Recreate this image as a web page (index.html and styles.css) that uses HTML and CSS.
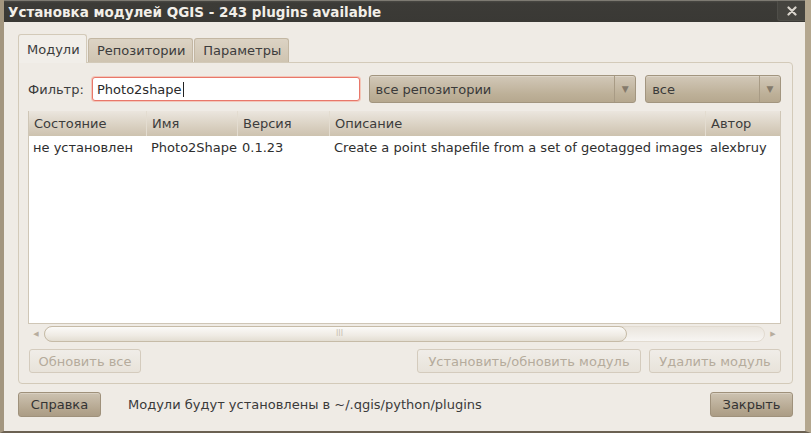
FILE: index.html
```html
<!DOCTYPE html>
<html lang="ru">
<head>
<meta charset="utf-8">
<title>Установка модулей QGIS</title>
<link rel="stylesheet" href="styles.css">
</head>
<body>
<div class="window">
  <div class="titlebar">
    <span class="title">Установка модулей QGIS - 243 plugins available</span>
    <span class="close"><svg width="10" height="10" viewBox="0 0 10 10"><path d="M1.5 1.5 L8.5 8.5 M8.5 1.5 L1.5 8.5" stroke="#d8d4cc" stroke-width="2.2" stroke-linecap="round"/></svg></span>
  </div>
  <div class="body">
    <div class="tabs">
      <div class="tab active">Модули</div>
      <div class="tab">Репозитории</div>
      <div class="tab">Параметры</div>
    </div>
    <div class="pane">
      <div class="filter-row">
        <span class="label">Фильтр:</span>
        <div class="input">Photo2shape<span class="caret"></span></div>
        <div class="combo repo"><span class="combo-text">все репозитории</span><span class="combo-arrow">▼</span></div>
        <div class="combo kind"><span class="combo-text">все</span><span class="combo-arrow">▼</span></div>
      </div>
      <div class="tablebox">
        <div class="grid">
          <div class="th">Состояние</div>
          <div class="th">Имя</div>
          <div class="th">Версия</div>
          <div class="th">Описание</div>
          <div class="th last">Автор</div>
          <div class="td">не установлен</div>
          <div class="td">Photo2Shape</div>
          <div class="td">0.1.23</div>
          <div class="td">Create a point shapefile from a set of geotagged images</div>
          <div class="td">alexbruy</div>
        </div>
        <div class="hscroll">
          <span class="sarrow left">◀</span>
          <div class="trough"><div class="thumb"><span class="grip">III</span></div></div>
          <span class="sarrow right">▶</span>
        </div>
      </div>
      <div class="actions">
        <div class="btn disabled upd">Обновить все</div>
        <div class="spacer"></div>
        <div class="btn disabled inst">Установить/обновить модуль</div>
        <div class="btn disabled del">Удалить модуль</div>
      </div>
    </div>
    <div class="footer">
      <div class="btn active-btn">Справка</div>
      <span class="footnote">Модули будут установлены в ~/.qgis/python/plugins</span>
      <div class="spacer"></div>
      <div class="btn active-btn">Закрыть</div>
    </div>
  </div>
</div>
</body>
</html>
```

FILE: styles.css
```css
html, body {
  margin: 0;
  padding: 0;
  background: #efebe5;
}
body {
  font-family: "DejaVu Sans", "Liberation Sans", sans-serif;
  font-size: 13px;
  color: #3c3c3c;
}
.window {
  width: 811px;
  height: 433px;
  box-sizing: border-box;
  display: flex;
  flex-direction: column;
  background: #efebe5;
  border-left: 4px solid #a3967f;
  border-right: 6px solid #b4a78f;
  border-bottom: 2px solid #6b6152;
  overflow: hidden;
}
.titlebar {
  height: 22px;
  flex: none;
  background: linear-gradient(#4a4944 0, #3c3b37 2px, #3a3935 100%);
  border-top: 1px solid #7d7a72;
  box-sizing: border-box;
  display: flex;
  align-items: center;
  margin-left: -4px;
  padding-left: 8px;
}
.title {
  font-weight: bold;
  font-size: 13.5px;
  color: #f2efe9;
  flex: 1;
  white-space: nowrap;
  line-height: 20px;
}
.close {
  width: 27px;
  height: 19px;
  margin-top: -1px;
  background: #45443f;
  border-left: 1px solid #4f4e49;
  border-bottom: 1px solid #4f4e49;
  border-radius: 0 0 0 3px;
  display: flex;
  align-items: center;
  justify-content: center;
}
.body {
  flex: 1;
  display: flex;
  flex-direction: column;
  padding: 12px 12px 0 14px;
}
.tabs {
  display: flex;
  align-items: flex-end;
  height: 28px;
  position: relative;
  z-index: 1;
}
.tab {
  height: 24px;
  box-sizing: border-box;
  padding: 0 7px 0 8px;
  display: flex;
  align-items: center;
  background: linear-gradient(#dcd3c4, #cfc4b1);
  border: 1px solid #c3b7a3;
  border-bottom: none;
  border-radius: 3px 3px 0 0;
  margin-right: 1px;
  color: #3c3c3c;
}
.tab.active {
  height: 29px;
  margin-bottom: -1px;
  background: #f1eee9;
  border-color: #d3cab9;
  width: 69px;
}
.pane {
  height: 322px;
  box-sizing: border-box;
  border: 1px solid #d3cab9;
  border-radius: 0 4px 4px 4px;
  padding: 12px 11px 0 9px;
  display: flex;
  flex-direction: column;
}
.filter-row {
  display: flex;
  align-items: center;
  height: 28px;
}
.label {
  width: 64px;
  flex: none;
}
.input {
  width: 268px;
  height: 24px;
  box-sizing: border-box;
  background: #fff;
  border: 1px solid #e8776a;
  border-radius: 3px;
  box-shadow: 0 0 0 1px #f3c6b9;
  display: flex;
  align-items: center;
  padding-left: 4px;
  color: #2a2a2a;
}
.caret {
  width: 1px;
  height: 15px;
  background: #222;
  margin-left: 1px;
}
.combo {
  height: 28px;
  box-sizing: border-box;
  border: 1px solid #a2957f;
  border-radius: 3px;
  background: linear-gradient(#d2c8b8, #bdb098 70%, #b6a88f);
  display: flex;
  align-items: center;
  box-shadow: inset 0 1px 0 #ddd5c8;
}
.combo.repo {
  width: 268px;
  margin-left: 9px;
}
.combo.kind {
  width: 136px;
  margin-left: 9px;
}
.combo-text {
  flex: 1;
  padding-left: 6px;
  color: #3a3a3a;
}
.combo-arrow {
  width: 21px;
  height: 26px;
  box-sizing: border-box;
  border-left: 1px solid #a89b85;
  display: flex;
  align-items: center;
  justify-content: center;
  font-size: 9px;
  color: #847a6b;
}
.tablebox {
  margin-top: 8px;
  display: flex;
  flex-direction: column;
}
.grid {
  height: 213px;
  box-sizing: border-box;
  background: #fff;
  border: 1px solid #cfc6b6;
  border-top: none;
  display: grid;
  grid-template-columns: 118px 91px 92px 376px 1fr;
  grid-template-rows: 25px 20px;
  align-content: start;
}
.th {
  background: linear-gradient(#ebe6de, #d9d0c1 60%, #cdc2af);
  border-right: 1px solid #e3dcd0;
  display: flex;
  align-items: center;
  padding-left: 5px;
  color: #3c3c3c;
  white-space: nowrap;
}
.th.last {
  border-right: none;
}
.td {
  display: flex;
  align-items: center;
  padding-left: 4px;
  white-space: nowrap;
  color: #2e2e2e;
  padding-top: 2px;
}
.hscroll {
  height: 17px;
  margin-top: 1px;
  display: flex;
  align-items: center;
}
.sarrow {
  font-size: 7px;
  color: #b7ad9e;
  width: 16px;
  text-align: center;
}
.trough {
  flex: 1;
  height: 16px;
  box-sizing: border-box;
  border: 1px solid #e2dbd0;
  border-radius: 8px;
  background: linear-gradient(#eae5dd, #f7f5f2);
  display: flex;
}
.thumb {
  width: 583px;
  height: 16px;
  margin-top: -1px;
  margin-left: -1px;
  box-sizing: border-box;
  border: 1px solid #c6bba7;
  border-radius: 8px;
  background: linear-gradient(#fbfaf8, #efebe4 60%, #e3ddd2);
  display: flex;
  align-items: center;
  justify-content: center;
}
.grip {
  font-size: 8px;
  color: #c9c1b3;
  margin-left: 8px;
}
.actions {
  display: flex;
  margin-top: 7px;
  height: 24px;
}
.spacer {
  flex: 1;
}
.btn {
  height: 24px;
  box-sizing: border-box;
  border-radius: 3px;
  display: flex;
  align-items: center;
  justify-content: center;
  white-space: nowrap;
}
.btn.disabled {
  border: 1px solid #d4cbbd;
  background: linear-gradient(#f0ede8, #e8e3da);
  color: #b5ab9c;
}
.btn.upd {
  width: 112px;
  margin-left: 1px;
}
.btn.inst {
  width: 224px;
}
.btn.del {
  width: 132px;
  margin-left: 8px;
}
.footer {
  display: flex;
  align-items: center;
  height: 25px;
  margin-top: 8px;
}
.btn.active-btn {
  width: 83px;
  height: 25px;
  border: 1px solid #9f917b;
  background: linear-gradient(#cdc2b1, #b5a790 70%, #ab9c85);
  box-shadow: inset 0 1px 0 #d8cfc1;
  color: #333;
}
.footnote {
  margin-left: 27px;
  color: #3a3a3a;
}
```
